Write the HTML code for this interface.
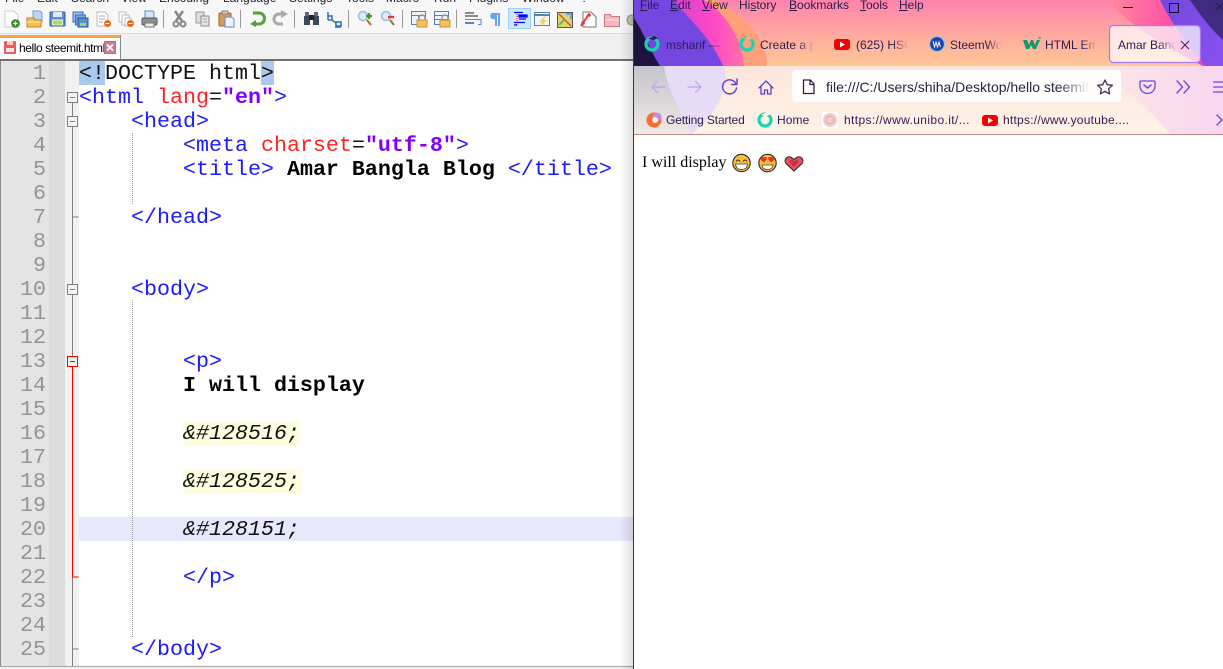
<!DOCTYPE html>
<html lang="en"><head><meta charset="utf-8"><title>Notepad++ and Firefox</title>
<style>
html,body{margin:0;padding:0;background:#fff;width:1223px;height:669px;overflow:hidden}
#w{position:relative;width:1223px;height:669px;overflow:hidden;font-family:"Liberation Sans",sans-serif}
.a{position:absolute}
.m{position:absolute;top:-9px;font-size:12px;line-height:14px;color:#222;white-space:nowrap}
.l{position:absolute;left:79px;height:24px;line-height:26px;font-family:"Liberation Mono",monospace;font-size:21.67px;white-space:pre;color:#1a1aff}
.n{position:absolute;left:2px;width:44px;height:24px;line-height:26px;text-align:right;font-family:"Liberation Mono",monospace;font-size:21.67px;color:#949494}
.r{color:#f22}.v{color:#8000ff;font-weight:bold}.b{color:#000;font-weight:bold}.k{color:#111}
.e{display:inline-block;height:24px;line-height:26px;vertical-align:top;color:#111;font-style:italic;background:#fdfde0}
.fm{position:absolute;top:-2px;font-size:12px;line-height:14px;color:#2a1a4a;white-space:nowrap}
.fm u{text-decoration:underline}
.t{position:absolute;top:38px;font-size:12px;line-height:15px;color:#2a1d55;white-space:nowrap;overflow:hidden;-webkit-mask-image:linear-gradient(90deg,#000 70%,transparent);mask-image:linear-gradient(90deg,#000 70%,transparent)}
.bm{position:absolute;top:113px;font-size:12px;line-height:15px;color:#2a1d55;white-space:nowrap}
</style></head><body><div id="w">

<!-- Notepad++ chrome -->
<div class="a" style="left:0;top:0;width:634px;height:33px;background:#f7f7f7"></div>
<div class="a" style="left:0;top:33px;width:634px;height:27px;background:#f0f0f0;border-top:1px solid #dcdcdc;box-sizing:border-box"></div>
<span class="m" style="left:5px">File</span><span class="m" style="left:37px">Edit</span><span class="m" style="left:71px">Search</span><span class="m" style="left:121px">View</span><span class="m" style="left:159px">Encoding</span><span class="m" style="left:223px">Language</span><span class="m" style="left:289px">Settings</span><span class="m" style="left:346px">Tools</span><span class="m" style="left:386px">Macro</span><span class="m" style="left:434px">Run</span><span class="m" style="left:469px">Plugins</span><span class="m" style="left:522px">Window</span><span class="m" style="left:581px">?</span>

<svg class="a" style="left:0;top:0" width="634" height="34" viewBox="0 0 634 34">
<path d="M5 11h9l4 4v12H5z" fill="#fff" stroke="#ccc"/><circle cx="15.500" cy="23.500" r="3.800" fill="#4a9a3c" stroke="#2f7026"/><path d="M13.500 23.500h4M15.500 21.500v4" stroke="#fff"/>
<path d="M33 11h7l2 2v9h-9z" fill="#bcd6f2" stroke="#6f9bd1"/><path d="M27 18h7l1 2h6v7H27z" fill="#f5c04f" stroke="#c8862a"/><path d="M27 22h14" stroke="#fff0b0"/>
<rect x="50" y="12" width="15" height="14" rx="1" fill="#5a8fd2" stroke="#2a5a9e"/><rect x="53" y="12" width="9" height="5" fill="#dfeaf7"/><rect x="52.500" y="20" width="10" height="5" fill="#a6d866" stroke="#eaf5d8"/>
<rect x="73" y="12" width="10" height="10" fill="#9bbde6" stroke="#3d6eae"/><rect x="75.500" y="15" width="10" height="10" fill="#7aa6dc" stroke="#3d6eae"/><rect x="78" y="18" width="10" height="9" fill="#5a8fd2" stroke="#2a5a9e"/><rect x="80" y="23" width="6" height="3" fill="#a6d866"/>
<path d="M97 12h8l3 3v11H97z" fill="#fff" stroke="#bbb"/><path d="M99 16h6M99 19h6M99 22h4" stroke="#aaa"/><circle cx="107.500" cy="23.500" r="3.500" fill="#ea6a1c"/><path d="M105.500 23.500h4" stroke="#fff"/>
<path d="M119 12h7v10h-7z" fill="#fff" stroke="#bbb"/><path d="M122 15h7v10h-7z" fill="#fff" stroke="#bbb"/><path d="M125 18h6v8h-6z" fill="#fff" stroke="#bbb"/><circle cx="130.500" cy="23.500" r="3.500" fill="#ea6a1c"/><path d="M128.500 23.500h4" stroke="#fff"/>
<path d="M145 11h8l1 2v6h-9z" fill="#d6e6f7" stroke="#5f8dc5"/><rect x="142" y="18" width="15" height="7" rx="1.500" fill="#8f8f8f" stroke="#555"/><rect x="145" y="23" width="9" height="4" fill="#eee" stroke="#777"/>
<path d="M163.500 10v18M240.500 10v18M294.500 10v18M348.500 10v18M402.500 10v18M456.500 10v18" stroke="#9a9a9a"/>
<path d="M183 11l-7 10M175 11l7 10" stroke="#888" stroke-width="2.500" fill="none"/><circle cx="176" cy="24" r="2.500" fill="none" stroke="#888" stroke-width="2"/><circle cx="183" cy="24" r="2.500" fill="none" stroke="#888" stroke-width="2"/>
<path d="M196 12h8v11h-8z" fill="#ddd" stroke="#999"/><path d="M201 16h8v10h-8z" fill="#e4e4e4" stroke="#8b8b8b"/><path d="M203 19h4M203 22h4" stroke="#aaa"/>
<rect x="219" y="13" width="12" height="13" rx="1" fill="#d89a56" stroke="#9a6428"/><rect x="222" y="11" width="6" height="3" fill="#ccc" stroke="#888"/><path d="M225 17h6l3 2v8h-9z" fill="#eaf2fc" stroke="#5f8dc5"/>
<path d="M253 13h6a5 5 0 0 1 0 11h-6" fill="none" stroke="#54a23c" stroke-width="3"/><path d="M256 20l-6 4 6 3z" fill="#54a23c"/>
<path d="M285 14h-6a5 5 0 0 0 0 10h4" fill="none" stroke="#a9a9a9" stroke-width="3"/><path d="M281 10l7 4-7 4z" fill="#a9a9a9"/>
<rect x="304" y="16" width="6" height="9" fill="#3a4a5a"/><rect x="313" y="16" width="6" height="9" fill="#3a4a5a"/><rect x="309" y="15" width="5" height="5" fill="#222"/><rect x="305" y="12" width="4" height="4" fill="#667"/><rect x="314" y="12" width="4" height="4" fill="#667"/>
<path d="M328 12v8M328 16h4v4h-4" fill="none" stroke="#2c6fc4" stroke-width="1.500"/><path d="M332 20l4 3" stroke="#54a23c" stroke-width="2"/><path d="M336 22h5v4h-5zM335 27h6" fill="none" stroke="#2c6fc4" stroke-width="1.500"/>
<circle cx="363" cy="16" r="4.500" fill="#dce9f7" stroke="#9bbbdc" stroke-width="1.500"/><path d="M367 20l4 5" stroke="#a5703a" stroke-width="2"/><path d="M366 16h6M369 13v6" stroke="#3f9a32" stroke-width="2.200"/>
<circle cx="386" cy="16" r="4.500" fill="#dce9f7" stroke="#9bbbdc" stroke-width="1.500"/><path d="M390 20l4 5" stroke="#a5703a" stroke-width="2"/><path d="M388 17h6" stroke="#e33" stroke-width="2.400"/>
<g fill="none" stroke="#5a80b0"><rect x="411.500" y="11.500" width="14" height="13" fill="#eef4fb"/><path d="M411 15.500h15M418.500 15v9"/></g><rect x="417" y="20" width="10" height="7" fill="#f2c160" stroke="#c9962f"/><path d="M419 20v-2a3 3 0 0 1 6 0v2" fill="none" stroke="#999" stroke-width="1.500"/>
<g fill="none" stroke="#5a80b0"><rect x="434.500" y="11.500" width="14" height="13" fill="#eef4fb"/><path d="M434 15.500h15M434 19.500h15"/></g><rect x="440" y="20" width="10" height="7" fill="#f2c160" stroke="#c9962f"/><path d="M442 20v-2a3 3 0 0 1 6 0v2" fill="none" stroke="#999" stroke-width="1.500"/>
<path d="M465 13h9M465 16h13" stroke="#222"/><path d="M465 23h9" stroke="#4f86cc" stroke-width="2"/><path d="M465 19.500h16v5h-3" fill="none" stroke="#4f86cc"/>
<path d="M492 13h8v13h-2V15h-1v11h-2v-7a3 3 0 0 1-3-6z" fill="#6aa4ee"/>
<rect x="508.500" y="8.500" width="22" height="20" fill="#cce8ff" stroke="#99d1ff"/>
<path d="M517 12v14" stroke="#e00" stroke-dasharray="1 1"/><path d="M514 12.500h9M519 15h8v2h-8zM519 19h7M514 22.500h11M514 25h3" stroke="#00f" stroke-width="1.300" fill="#00f"/>
<rect x="534.500" y="12.500" width="15" height="13" fill="#eef4fb" stroke="#5a80b0"/><path d="M534 15h16" stroke="#5a80b0" stroke-width="2"/><path d="M545 16l-6 6h3l-2 5 7-7h-4l3-4z" fill="#f4cc55"/>
<rect x="557.500" y="12.500" width="15" height="15" fill="#d9d96a" stroke="#555"/><path d="M559 14l12 12" stroke="#e44" stroke-width="1.500"/><path d="M559 25l5-5" stroke="#6bbb55" stroke-width="2"/><path d="M566 14h5v5" stroke="#6ba5d8" stroke-width="2" fill="none"/>
<path d="M583 12h8l5 5v10h-13z" fill="#fff" stroke="#777"/><path d="M581 26l8-12" stroke="#e33" stroke-width="2"/><circle cx="583" cy="23" r="1.800" fill="#e33"/><circle cx="589" cy="15" r="1.800" fill="#e33"/>
<path d="M604.500 14.500h6l1 2h8v10h-15z" fill="#f2b8bc" stroke="#c97a80"/><path d="M605 20h14" stroke="#fbe3e3"/>
<circle cx="632" cy="20" r="5" fill="#bcc9b0" stroke="#8a9a7a"/>
</svg>

<!-- Tab -->
<div class="a" style="left:0;top:35px;width:120px;height:25px;background:#fff;border-right:1px solid #8a8a8a"></div>
<div class="a" style="left:0;top:35px;width:120px;height:3px;background:#f4a63a"></div>
<svg class="a" style="left:4px;top:41px" width="12" height="13" viewBox="0 0 12 13"><rect width="12" height="13" rx="1" fill="#ee5a5e"/><rect x="3" y="0" width="6" height="4" fill="#fbd4d4"/><rect x="2" y="7" width="8" height="4" fill="#fbe7e7"/></svg>
<div class="a" style="left:19px;top:40px;font-size:12px;line-height:16px;letter-spacing:-.42px;color:#000;white-space:nowrap">hello steemit.html</div>
<svg class="a" style="left:104px;top:41px" width="12" height="13" viewBox="0 0 12 13"><rect x=".5" y=".5" width="11" height="12" fill="#c87f97" stroke="#a8708a"/><path d="M3 3.500l6 6M9 3.500l-6 6" stroke="#fff" stroke-width="1.800"/></svg>
<div class="a" style="left:0;top:59px;width:634px;height:2px;background:#6e6e6e"></div>

<!-- Gutter -->
<div class="a" style="left:0;top:61px;width:1px;height:605px;background:#8a8a8a"></div>
<div class="a" style="left:1px;top:61px;width:48px;height:605px;background:#e4e4e4"></div>
<div class="a" style="left:49px;top:61px;width:16px;height:605px;background:#dcdcdc"></div>
<div class="a" style="left:65px;top:61px;width:14px;height:605px;background:#f1f1f1"></div>
<div class="a" style="left:0;top:666px;width:634px;height:1px;background:#a8a8a8"></div>
<div class="a" style="left:0;top:667px;width:634px;height:2px;background:#f0f0f0"></div>

<div class="n" style="top:61px">1</div><div class="n" style="top:85px">2</div><div class="n" style="top:109px">3</div><div class="n" style="top:133px">4</div><div class="n" style="top:157px">5</div><div class="n" style="top:181px">6</div><div class="n" style="top:205px">7</div><div class="n" style="top:229px">8</div><div class="n" style="top:253px">9</div><div class="n" style="top:277px">10</div><div class="n" style="top:301px">11</div><div class="n" style="top:325px">12</div><div class="n" style="top:349px">13</div><div class="n" style="top:373px">14</div><div class="n" style="top:397px">15</div><div class="n" style="top:421px">16</div><div class="n" style="top:445px">17</div><div class="n" style="top:469px">18</div><div class="n" style="top:493px">19</div><div class="n" style="top:517px">20</div><div class="n" style="top:541px">21</div><div class="n" style="top:565px">22</div><div class="n" style="top:589px">23</div><div class="n" style="top:613px">24</div><div class="n" style="top:637px">25</div>

<!-- Fold margin -->
<svg class="a" style="left:65px;top:61px" width="16" height="605" viewBox="0 0 16 605">
<path d="M7.500 34V605" stroke="#808080" fill="none"/>
<path d="M7.500 156h6M7.500 588h6" stroke="#808080"/>
<g fill="#f1f1f1" stroke="#808080"><rect x="2.500" y="31.500" width="10" height="10"/><rect x="2.500" y="55.500" width="10" height="10"/><rect x="2.500" y="223.500" width="10" height="10"/></g>
<path d="M5 36.500h5M5 60.500h5M5 228.500h5" stroke="#808080"/>
<path d="M7.500 305V516h6" stroke="#f00" fill="none"/>
<rect x="2.500" y="295.500" width="10" height="10" fill="#f1f1f1" stroke="#f00"/><path d="M5 300.500h5" stroke="#f00"/>
</svg>

<!-- Code -->
<div class="a" style="left:79px;top:517px;width:555px;height:24px;background:#e8e8fc"></div>
<div class="a" style="left:79px;top:61px;width:26px;height:24px;background:#a9c9ef"></div>
<div class="a" style="left:261px;top:61px;width:13px;height:24px;background:#a9c9ef"></div>
<svg class="a" style="left:132px;top:133px" width="1" height="510"><path d="M.5 0V72M.5 167V504" stroke="#999" stroke-dasharray="1 1"/></svg>

<div class="l k" style="top:61px">&lt;!DOCTYPE html&gt;</div>
<div class="l" style="top:85px">&lt;html <span class="r">lang</span><span class="k">=</span><span class="v">"en"</span>&gt;</div>
<div class="l" style="top:109px">    &lt;head&gt;</div>
<div class="l" style="top:133px">        &lt;meta <span class="r">charset</span><span class="k">=</span><span class="v">"utf-8"</span>&gt;</div>
<div class="l" style="top:157px">        &lt;title&gt;<span class="b"> Amar Bangla Blog </span>&lt;/title&gt;</div>
<div class="l" style="top:205px">    &lt;/head&gt;</div>
<div class="l" style="top:277px">    &lt;body&gt;</div>
<div class="l" style="top:349px">        &lt;p&gt;</div>
<div class="l" style="top:373px">        <span class="b">I will display</span></div>
<div class="l" style="top:421px">        <span class="e">&amp;#128516;</span></div>
<div class="l" style="top:469px">        <span class="e" style="padding-right:2px">&amp;#128525;</span></div>
<div class="l" style="top:517px">        <span class="e" style="background:none">&amp;#128151;</span></div>
<div class="l" style="top:565px">        &lt;/p&gt;</div>
<div class="l" style="top:637px">    &lt;/body&gt;</div>

<!-- Window shadow -->
<div class="a" style="left:620px;top:0;width:14px;height:669px;background:linear-gradient(90deg,rgba(0,0,0,0),rgba(0,0,0,.13))"></div>
<div class="a" style="left:633px;top:0;width:1px;height:669px;background:#3a3346"></div>

<!-- Firefox header -->
<svg class="a" style="left:634px;top:0" width="589" height="135" viewBox="634 0 589 135">
<defs>
<linearGradient id="g" x1="0" y1="0" x2="0" y2="1"><stop offset="0" stop-color="#ff82ac"/><stop offset=".5" stop-color="#ffa8a0"/><stop offset="1" stop-color="#ffc796"/></linearGradient>
<linearGradient id="mg" x1="0" y1="0" x2="1" y2="0"><stop offset="0" stop-color="#a048d8"/><stop offset=".7" stop-color="#ff46c8"/><stop offset="1" stop-color="#ff70a8"/></linearGradient>
<linearGradient id="rp" x1="0" y1="0" x2="1" y2="0"><stop offset="0" stop-color="#ff8a9a"/><stop offset=".55" stop-color="#ff50a8"/><stop offset="1" stop-color="#d040c0"/></linearGradient>
<linearGradient id="rv" x1="0" y1="0" x2="1" y2="1"><stop offset="0" stop-color="#7448e0"/><stop offset="1" stop-color="#8a50f0"/></linearGradient>
<linearGradient id="tb" x1="0" y1="0" x2="0" y2="1"><stop offset="0" stop-color="#fde6dc"/><stop offset="1" stop-color="#fff2e6"/></linearGradient>
<linearGradient id="gr" x1="0" y1="0" x2="0" y2="1"><stop offset="0" stop-color="#c4c4ce"/><stop offset="1" stop-color="#f0e8e4"/></linearGradient>
<linearGradient id="tr" x1="0" y1="0" x2="1" y2="0"><stop offset="0" stop-color="#fde6e6"/><stop offset="1" stop-color="#f8d6f0"/></linearGradient>
</defs>
<rect x="634" y="0" width="589" height="66" fill="url(#g)"/>
<path d="M716 0C745 15 767 40 767 66H634V0z" fill="#ffa07a"/>
<path d="M704 0C728 15 742 40 744 66H634V0z" fill="url(#mg)"/>
<path d="M673 0C695 25 712 40 723 66H634V0z" fill="#7448e0"/>
<path d="M634 18C645 35 650 50 660 66H634z" fill="#1e1240"/>
<path d="M1108 0C1123 20 1156 42 1203 66H1223V0z" fill="url(#rp)"/>
<path d="M1160 0C1172 25 1190 48 1206 66H1223V0z" fill="url(#rv)"/>
<path d="M1190 0C1202 18 1214 32 1223 40V0z" fill="#3f2c80"/>
<rect x="634" y="66" width="589" height="68" fill="url(#tb)"/>
<path d="M1100 66H1223V134H1170C1150 110 1120 85 1100 66z" fill="url(#tr)"/>
<path d="M634 66H724C730 90 715 115 692 134H634z" fill="#e6dcf8"/>
<path d="M634 66H664C668 90 680 112 692 134H634z" fill="url(#gr)"/>
<rect x="634" y="134" width="589" height="1" fill="#bb8a80"/>
<path d="M1123 7.500h10" stroke="#111"/><rect x="1169.500" y="3.500" width="9" height="9" fill="none" stroke="#111"/><path d="M1216 3l7 7M1223 3l-7 7" stroke="#222"/>
<rect x="1109.500" y="25.500" width="91" height="37" rx="4" fill="#fff" fill-opacity=".72" stroke="#a878f0" stroke-width="1.200"/>
<path d="M1181 41l8 8M1189 41l-8 8" stroke="#3a2d5e" stroke-width="1.100"/>
<path d="M1219 44.500h4" stroke="#7a5ae0"/>
<rect x="792" y="70" width="329" height="32" rx="4" fill="#fff" fill-opacity=".92"/>
<g fill="none" stroke-linecap="round" stroke-linejoin="round">
<path d="M652 87h13M657.500 81.500L652 87l5.500 5.500" stroke="#b9a2ee" stroke-width="1.200"/>
<path d="M701 87h-13M695.500 81.500L701 87l-5.500 5.500" stroke="#b9a2ee" stroke-width="1.200"/>
<path d="M736 84a7 7 0 1 0 .5 4" stroke="#5b3fd0" stroke-width="1.400"/><path d="M737 79v5.500h-5.500" stroke="#5b3fd0" stroke-width="1.400"/>
<path d="M759 88l7-7 7 7M761 86.500V94h3.500v-4h3v4h3.500v-7.500" stroke="#5b3fd0" stroke-width="1.300"/>
<path d="M803.500 80h7l3.500 4v9.500h-10.500zM810 80v4.500h4" stroke="#2b2440" stroke-width="1.300"/>
<path d="M1105 80l2.200 4.700 5.200.6-3.800 3.500 1 5.100-4.600-2.600-4.600 2.600 1-5.100-3.800-3.500 5.200-.6z" stroke="#3d3550" stroke-width="1.300"/>
<path d="M1141 81h13a1 1 0 0 1 1 1v4a7.500 7.500 0 0 1-15 0v-4a1 1 0 0 1 1-1z" stroke="#7048dc" stroke-width="1.300"/><path d="M1144 85l3.500 3 3.500-3" stroke="#7048dc" stroke-width="1.500"/>
<path d="M1177 81l5.500 6-5.500 6M1184 81l5.500 6-5.500 6" stroke="#7048dc" stroke-width="1.400"/>
<path d="M1213.500 82h10M1213.500 87h10M1213.500 92h10" stroke="#6a48d8" stroke-width="1.300"/>
<path d="M1217 115l5 5-5 5" stroke="#6a48d8" stroke-width="1.400"/>
</g>
<g fill="none" stroke="#14d6b0" stroke-width="3.200"><circle cx="652" cy="44" r="6"/><circle cx="747" cy="44" r="6"/><circle cx="765" cy="120" r="6"/></g>
<path d="M648 39l6-3 4 2-4 2z" fill="#2a1a6a"/><path d="M743 39l6-3 4 2-4 2z" fill="#fbb088"/><path d="M761 115l6-3 4 2-4 2z" fill="#fff3e8"/>
<g fill="#f60000"><rect x="834" y="39" width="16" height="11" rx="3"/><rect x="982" y="115" width="16" height="11" rx="3"/></g>
<path d="M840 41.500l5 3-5 3zM988 117.500l5 3-5 3z" fill="#fff"/>
<circle cx="937" cy="44" r="7.500" fill="#1a3fb8" stroke="#9fc7c7" stroke-width="1.300"/><path d="M933 41l1.500 6 1.500-5 1.500 5 1.500-5 1.500 5" stroke="#fff" fill="none"/>
<path d="M1023 40h4l2 5 2-5h2l2 5 2-5h3l-4 9h-3l-2-4-2 4h-3z" fill="#119a6a"/><path d="M1038 38h3" stroke="#119a6a"/>
<circle cx="654" cy="120" r="7.500" fill="#ff6a2a"/><circle cx="657" cy="117" r="4.500" fill="#c88adf"/><circle cx="655" cy="120" r="3" fill="#fff0e8"/>
<rect x="822" y="112" width="16" height="16" fill="#fff"/><circle cx="830" cy="120" r="7" fill="#f4cccc"/><circle cx="830" cy="120" r="4" fill="none" stroke="#d98a8a" stroke-dasharray="1 1"/>
</svg>

<!-- Firefox menu -->
<span class="fm" style="left:640px"><u>F</u>ile</span><span class="fm" style="left:670px"><u>E</u>dit</span><span class="fm" style="left:702px"><u>V</u>iew</span><span class="fm" style="left:739px">Hi<u>s</u>tory</span><span class="fm" style="left:789px"><u>B</u>ookmarks</span><span class="fm" style="left:860px"><u>T</u>ools</span><span class="fm" style="left:899px"><u>H</u>elp</span>

<!-- Tabs -->
<div class="t" style="left:666px;width:60px">msharif — </div>
<div class="t" style="left:760px;width:54px">Create a post</div>
<div class="t" style="left:856px;width:52px">(625) HSC ICT</div>
<div class="t" style="left:950px;width:52px">SteemWorld</div>
<div class="t" style="left:1045px;width:52px">HTML Emoji</div>
<div class="t" style="left:1118px;width:58px">Amar Bangla</div>

<!-- URL -->
<div class="a" style="left:826px;top:79px;width:264px;font-size:14px;line-height:16px;color:#2a2440;white-space:nowrap;overflow:hidden;-webkit-mask-image:linear-gradient(90deg,#000 88%,transparent);mask-image:linear-gradient(90deg,#000 88%,transparent)">file:///C:/Users/shiha/Desktop/hello steemit.html</div>

<!-- Bookmarks -->
<span class="bm" style="left:666px;letter-spacing:-.14px">Getting Started</span><span class="bm" style="left:777px;letter-spacing:.1px">Home</span><span class="bm" style="left:844px;letter-spacing:.38px">https://www.unibo.it/...</span><span class="bm" style="left:1003px;letter-spacing:.24px">https://www.youtube....</span>

<!-- Page -->
<div class="a" style="left:642px;top:154px;font-family:'Liberation Serif',serif;font-size:16px;line-height:18px;color:#000;white-space:nowrap">I will display</div>
<svg class="a" style="left:730px;top:152px" width="76" height="22" viewBox="730 152 76 22">
<circle cx="741.500" cy="163" r="8.700" fill="#f7bf3c" stroke="#2b2b2b" stroke-width="1.100"/>
<path d="M736 161.500q2-3 4 0M743 161.500q2-3 4 0" fill="none" stroke="#333" stroke-width="1.100"/>
<path d="M735.500 164h12q-.5 5.500-6 5.500t-6-5.500z" fill="#fff" stroke="#444" stroke-width=".8"/>
<circle cx="767.500" cy="163" r="8.700" fill="#f7bf3c" stroke="#2b2b2b" stroke-width="1.100"/>
<path d="M764 157.500c1.500-1.500 3.500 0 2.500 2l-2.500 3-3-2.500c-1.500-2 1-4 3-2.500zM771 157.500c-1.500-1.500-3.500 0-2.500 2l2.500 3 3-2.500c1.500-2-1-4-3-2.500z" fill="#e8302c"/>
<path d="M762 165h11q-.5 4.500-5.500 4.500t-5.500-4.500z" fill="#fff" stroke="#444" stroke-width=".8"/>
<path d="M794 171l-8-7.500c-3-4 2-8.500 5.500-6l2.500 2 2.500-2c3.500-2.500 8.500 2 5.500 6z" fill="#e8505f" stroke="#2b2b2b" stroke-width="1.100"/>
<path d="M794 167l-4.500-4.500c-1-2 1.500-3.500 3-2.500l1.500 1 1.500-1c1.500-1 4 .5 3 2.500z" fill="#b81e3c" opacity=".6"/>
</svg>
</div></body></html>
